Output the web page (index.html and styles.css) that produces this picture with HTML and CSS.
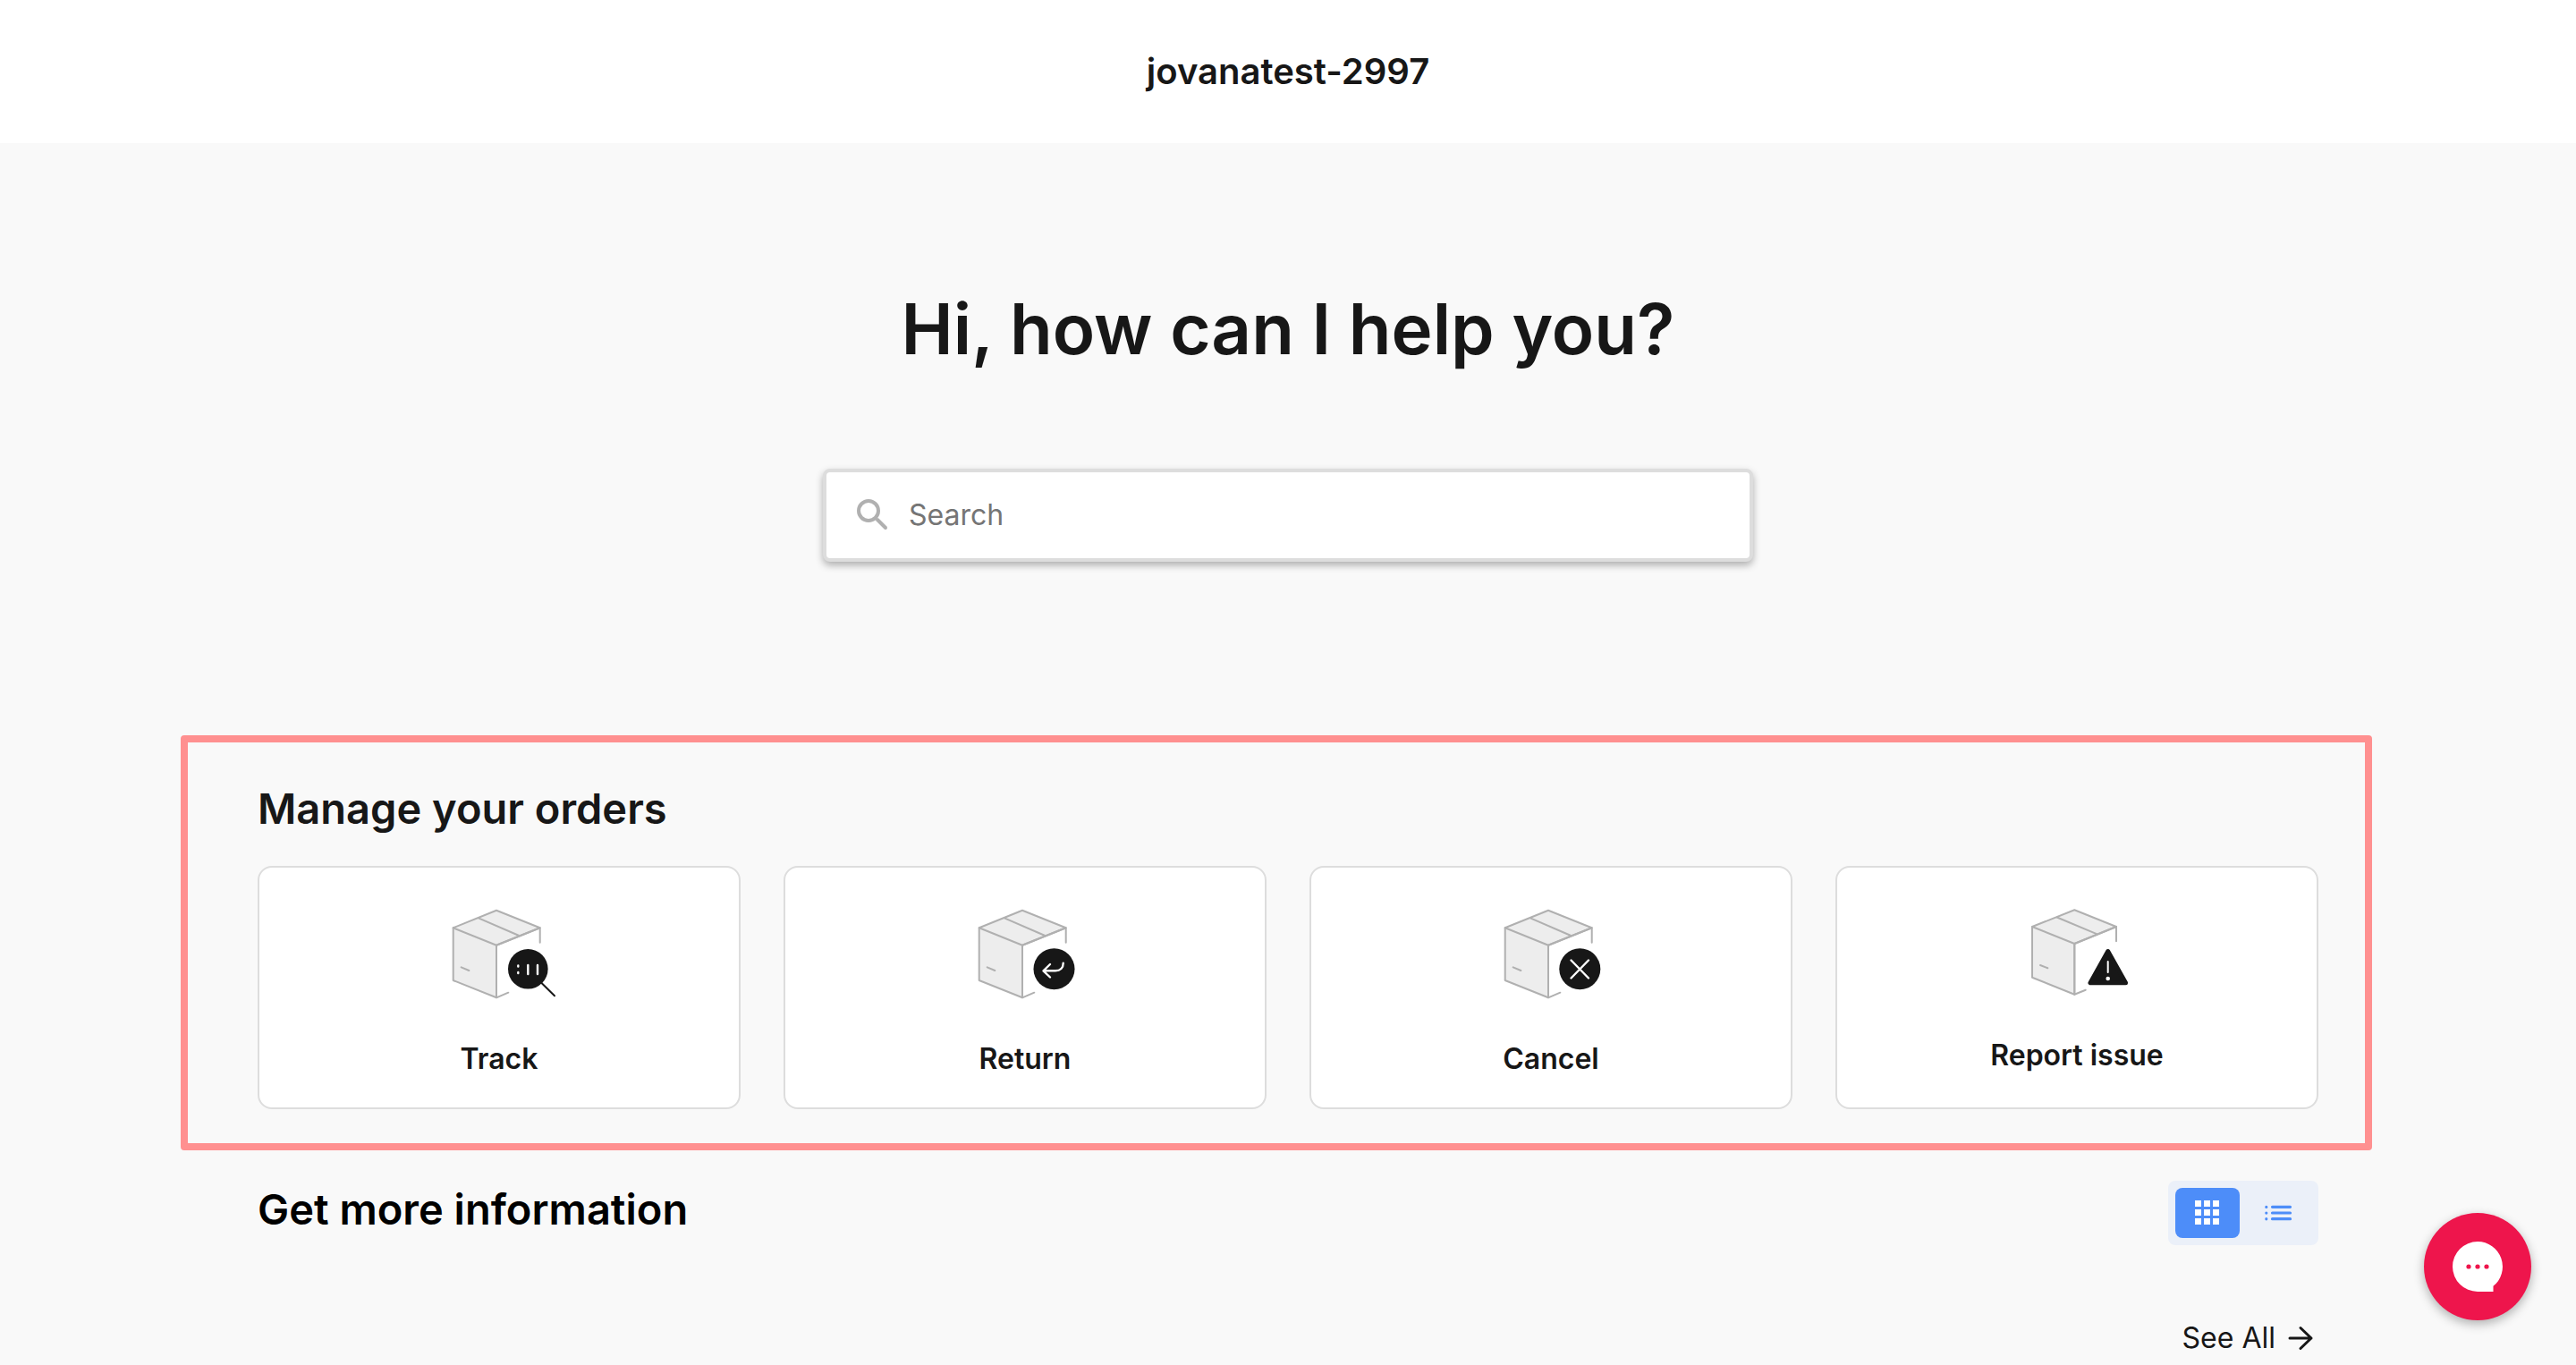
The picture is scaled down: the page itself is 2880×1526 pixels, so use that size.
FILE: index.html
```
<!DOCTYPE html>
<html lang="en">
<head>
    <meta charset="UTF-8">
    <meta name="viewport" content="width=device-width, initial-scale=1.0">
    <title>jovanatest-2997</title>
    <link rel="stylesheet" href="styles.css">
</head>
<body>
    <header class="header">jovanatest-2997</header>

    <main class="content">
        <h1>Hi, how can I help you?</h1>

        <form class="search">
            <svg width="40" height="40" viewBox="0 0 40 40" aria-hidden="true">
                <circle cx="15" cy="15" r="11" />
                <path d="M25 25L34 34" />
            </svg>
            <input type="search" placeholder="Search" aria-label="Search">
        </form>

        <section class="orders">
            <h2>Manage your orders</h2>
            <div class="cards">
                <button type="button" class="card">
                    <svg width="128" height="124" viewBox="0 0 128 124" aria-hidden="true">
                        <g class="box">
                            <path class="fill" d="M12.700 31.300L61 11.700L109.700 31.300L61 50.700V109.300L12.700 90Z" />
                            <path d="M12.700 31.300L61 50.700L109.700 31.300V47.700M61 50.700V109.300L74.300 103.700M41 20.300L86.300 40M21.700 75.300L30.300 79" />
                        </g>
                        <circle class="badge" cx="96.300" cy="77.300" r="22.300" />
                        <path class="handle" d="M111 92.500L126 107.300" />
                        <path class="mark" d="M85.300 73.500V74.500M85.300 81V82M96.300 73V83M107 73V83" />
                    </svg>
                    <span>Track</span>
                </button>
                <button type="button" class="card">
                    <svg width="128" height="124" viewBox="0 0 128 124" aria-hidden="true">
                        <g class="box">
                            <path class="fill" d="M12.700 31.300L61 11.700L109.700 31.300L61 50.700V109.300L12.700 90Z" />
                            <path d="M12.700 31.300L61 50.700L109.700 31.300V47.700M61 50.700V109.300L74.300 103.700M41 20.300L86.300 40M21.700 75.300L30.300 79" />
                        </g>
                        <circle class="badge" cx="96.500" cy="77.300" r="23" />
                        <path class="mark" d="M92 72L84.500 79.300L92 86.500M85 79.300H98C103.500 79.300 106.700 76 106.700 70.700" />
                    </svg>
                    <span>Return</span>
                </button>
                <button type="button" class="card">
                    <svg width="128" height="124" viewBox="0 0 128 124" aria-hidden="true">
                        <g class="box">
                            <path class="fill" d="M12.700 31.300L61 11.700L109.700 31.300L61 50.700V109.300L12.700 90Z" />
                            <path d="M12.700 31.300L61 50.700L109.700 31.300V47.700M61 50.700V109.300L74.300 103.700M41 20.300L86.300 40M21.700 75.300L30.300 79" />
                        </g>
                        <circle class="badge" cx="96.300" cy="77.300" r="23" />
                        <path class="mark" d="M86.500 67.500L106 87.500M106 67.500L86.500 87.500" />
                    </svg>
                    <span>Cancel</span>
                </button>
                <button type="button" class="card">
                    <svg width="128" height="120" viewBox="0 0 128 120" aria-hidden="true">
                        <g class="box">
                            <path class="fill" d="M14 30L61.300 11.300L108 30L61.300 49V105.700L14 86.700Z" />
                            <path d="M14 30L61.300 49L108 30V46.300M61.300 49V105.700L73.700 100.700M41.700 19.500L86.700 38.300M23 73L31.300 76.300" />
                        </g>
                        <path class="badge triangle" d="M98.700 57.500L79 92.800H118.500Z" />
                        <path class="mark thin" d="M98.700 69V81" />
                        <circle class="dot" cx="98.700" cy="88" r="2.300" />
                    </svg>
                    <span>Report issue</span>
                </button>
            </div>
        </section>

        <section class="info">
            <div class="info-header">
                <h2>Get more information</h2>
                <div class="toggle">
                    <button type="button" class="active" aria-label="Grid view">
                        <svg width="28" height="28" viewBox="0 0 28 28" fill="#fff" aria-hidden="true">
                            <path d="M0 0h7v7h-7zM10 0h7v7h-7zM20 0h7v7h-7zM0 10h7v7h-7zM10 10h7v7h-7zM20 10h7v7h-7zM0 20h7v7h-7zM10 20h7v7h-7zM20 20h7v7h-7z" />
                        </svg>
                    </button>
                    <button type="button" aria-label="List view">
                        <svg width="32" height="20" viewBox="0 0 32 20" stroke="#4d8df9" stroke-width="3.200" stroke-linecap="round" aria-hidden="true">
                            <path d="M1.800 3.300V3.400M8.500 3.300H28.500M1.800 10V10.100M8.500 10H28.500M1.800 16.700V16.800M8.500 16.700H28.500" />
                        </svg>
                    </button>
                </div>
            </div>
            <a href="#" class="see-all">See All
                <svg width="40" height="40" viewBox="0 0 40 40" aria-hidden="true">
                    <path d="M8 20H32M20 8.500L32 20L20 31.500" />
                </svg>
            </a>
        </section>
    </main>

    <button type="button" class="chat" aria-label="Open chat">
        <svg width="56" height="56" viewBox="0 0 56 56" aria-hidden="true">
            <path fill="#fff" d="M28 0a28 28 0 0 1 17.500 49.800V56H28a28 28 0 0 1 0-56z" />
            <g fill="#ee154c">
                <circle cx="18" cy="28" r="2.600" />
                <circle cx="28" cy="28" r="2.600" />
                <circle cx="38" cy="28" r="2.600" />
            </g>
        </svg>
    </button>
</body>
</html>
```
FILE: styles.css
```
* {
    box-sizing: border-box;
}

body {
    margin: 0;
    background-color: #f9f9f9;
    color: #171717;
    font-family: Inter, "Liberation Sans", sans-serif;
    font-size: 32px;
    line-height: 40px;
}

button {
    padding: 0;
    border: none;
    background: none;
    color: inherit;
    font: inherit;
    cursor: pointer;
}

svg {
    display: block;
    flex-shrink: 0;
}

.header {
    padding: 56px 0;
    background-color: #fff;
    text-align: center;
    font-size: 40px;
    font-weight: 600;
    line-height: 48px;
}

.content {
    width: 80%;
    margin: 0 auto;
    padding-top: 160px;
}

h1 {
    margin: 0 0 108px;
    text-align: center;
    font-size: 78px;
    font-weight: 600;
    line-height: 96px;
}

h2 {
    margin: 0;
    font-size: 47px;
    font-weight: 600;
    line-height: 64px;
}

/* search */
.search {
    display: flex;
    align-items: center;
    gap: 20px;
    max-width: 1040px;
    height: 104px;
    margin: 0 auto 194px;
    padding: 0 32px;
    background-color: #fff;
    border: 4px solid #ddd;
    border-radius: 8px;
    box-shadow: 0 4px 8px rgba(0, 0, 0, 0.3);
}

.search svg {
    fill: none;
    stroke: #b0b0b0;
    stroke-width: 4;
    stroke-linecap: round;
}

.search input {
    flex: 1;
    min-width: 0;
    padding: 0;
    border: none;
    outline: none;
    background: none;
    color: inherit;
    font: inherit;
}

.search input::placeholder {
    color: #757575;
}

/* orders */
.orders {
    margin: 0 -60px 34px -86px;
    padding: 42px 52px 38px 78px;
    border: 8px solid #ff9090;
    border-radius: 4px;
}

.cards {
    display: grid;
    grid-template-columns: repeat(4, 1fr);
    gap: 48px;
    margin-top: 32px;
}

.card {
    display: flex;
    flex-direction: column;
    align-items: center;
    gap: 34px;
    padding: 36px 0 34px;
    background-color: #fff;
    border: 2px solid #ddd;
    border-radius: 16px;
    font-weight: 600;
}

.box {
    fill: none;
    stroke: #b0b0b0;
    stroke-width: 2;
    stroke-linecap: round;
    stroke-linejoin: round;
}

.box .fill {
    fill: #ededed;
}

.badge {
    fill: #171717;
}

.triangle {
    stroke: #171717;
    stroke-width: 5;
    stroke-linejoin: round;
}

.handle {
    stroke: #171717;
    stroke-width: 2;
    stroke-linecap: round;
}

.mark {
    fill: none;
    stroke: #fff;
    stroke-width: 2.400;
    stroke-linecap: round;
    stroke-linejoin: round;
}

.thin {
    stroke-width: 2;
}

.dot {
    fill: #fff;
}

/* more information */
.info-header {
    display: flex;
    justify-content: space-between;
    align-items: flex-start;
    margin-bottom: 84px;
    color: #000;
}

.toggle {
    display: flex;
    gap: 8px;
    padding: 8px;
    background-color: #ebf0f9;
    border-radius: 8px;
}

.toggle button {
    display: flex;
    align-items: center;
    justify-content: center;
    width: 72px;
    height: 56px;
    border-radius: 8px;
}

.toggle .active {
    background-color: #4d8df9;
}

.see-all {
    display: flex;
    align-items: center;
    justify-content: flex-end;
    gap: 8px;
    color: inherit;
    text-decoration: none;
}

.see-all svg {
    fill: none;
    stroke: #171717;
    stroke-width: 3;
    stroke-linecap: round;
    stroke-linejoin: round;
}

/* chat launcher */
.chat {
    position: fixed;
    right: 50px;
    bottom: 50px;
    display: flex;
    align-items: center;
    justify-content: center;
    width: 120px;
    height: 120px;
    border-radius: 50%;
    background-color: #ee154c;
    box-shadow: 0 4px 12px rgba(0, 0, 0, 0.3);
}
```
